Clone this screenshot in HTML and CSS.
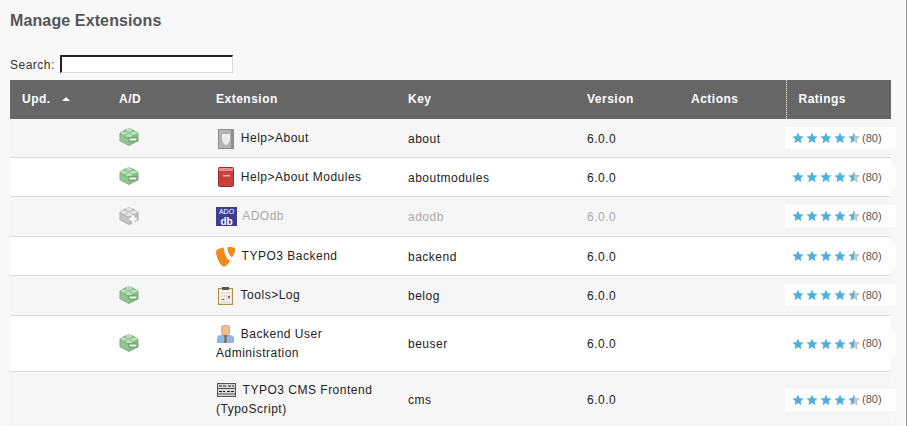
FILE: index.html
```html
<!DOCTYPE html>
<html lang="en">
<head>
  <meta charset="UTF-8" />
  <title>Manage Extensions</title>
  <link rel="stylesheet" href="styles.css">
</head>
<body>
  <svg class="defs" width="0" height="0">
    <defs>
      <symbol id="brick" viewBox="0 0 20 18">
        <path d="M.5 5.500Q.5 4.500 2 4L7 1Q10 0 13 1L18 4Q19.500 4.500 19.500 6V13L10 18 .5 13Z" fill="#7fb27f"/>
        <path d="M1.500 7L10 11.500V17L1.500 12.600Z" fill="#93c593"/>
        <path d="M18.500 7L10 11.500V17L18.500 12.600Z" fill="#86ba86"/>
        <path d="M1.500 6L10 1.500 18.500 6 10 10.500Z" fill="#a3cfa3"/>
        <ellipse cx="10" cy="2.800" rx="3.400" ry="2" fill="#8abe8a"/>
        <ellipse cx="10" cy="2.200" rx="3" ry="1.500" fill="#bcdfbc"/>
        <ellipse cx="5" cy="5.500" rx="3.400" ry="2" fill="#8abe8a"/>
        <ellipse cx="5" cy="4.900" rx="3" ry="1.500" fill="#bcdfbc"/>
        <ellipse cx="15" cy="5.500" rx="3.400" ry="2" fill="#8abe8a"/>
        <ellipse cx="15" cy="4.900" rx="3" ry="1.500" fill="#bcdfbc"/>
        <ellipse cx="10" cy="8" rx="3.400" ry="2" fill="#8abe8a"/>
        <ellipse cx="10" cy="7.400" rx="3" ry="1.500" fill="#bcdfbc"/>
      </symbol>
      <symbol id="star" viewBox="0 0 12 12">
        <path d="M6 .5 7.6 4.3 11.6 4.6 8.6 7.2 9.5 11.3 6 9.1 2.5 11.3 3.4 7.2 .4 4.6 4.4 4.3Z"/>
      </symbol>
    </defs>
  </svg>

  <h1 class="title">Manage Extensions</h1>
  <div class="search">
    <label for="q">Search:</label>
    <input id="q" type="text">
  </div>

  <table class="extensions">
    <colgroup>
      <col class="c-upd"><col class="c-ad"><col class="c-ext"><col class="c-key"><col class="c-ver"><col class="c-act"><col class="c-rate">
    </colgroup>
    <thead>
      <tr>
        <th>Upd. <span class="sort"></span></th>
        <th>A/D</th>
        <th>Extension</th>
        <th>Key</th>
        <th>Version</th>
        <th>Actions</th>
        <th class="ratings-head">Ratings</th>
      </tr>
    </thead>
    <tbody id="rows"></tbody>
  </table>

  <script>
    const icons = {
      about: '<svg class="icon i-about" width="16" height="20" viewBox="0 0 16 20"><rect x=".5" y=".5" width="15" height="19" fill="#b4b4b4" stroke="#8c8c8c"/><path d="M4 5 H12 V11 Q11 15 8 16 Q5 15 4 11Z" fill="#ececec"/><rect x="13" y="1" width="2" height="18" fill="#8f8f8f"/></svg>',
      modules: '<svg class="icon i-modules" width="16" height="20" viewBox="0 0 16 20"><rect x=".5" y=".5" width="15" height="19" rx="1" fill="#c9403f" stroke="#9a2a2a"/><rect x="1" y="1" width="14" height="3" fill="#e58b8a"/><rect x="5" y="8" width="7" height="1.500" fill="#f0b5b5"/></svg>',
      adodb: '<svg class="icon i-adodb" width="21" height="19" viewBox="0 0 21 19"><rect width="21" height="19" fill="#3a3f94"/><text x="10.500" y="6.500" text-anchor="middle" class="ado">ADO</text><text x="10.500" y="17.500" text-anchor="middle" class="db">db</text></svg>',
      typo3: '<svg class="icon i-typo3" width="20" height="21" viewBox="0 0 20 21"><path d="M14.500 14.400c-.3.1-.5.1-.8.1-2.400 0-5.900-8.400-5.900-11.200 0-1 .2-1.400.6-1.700C5.400 1.900 1.600 3 .4 4.500.1 4.900 0 5.500 0 6.300 0 10.700 4.600 20.600 7.900 20.600c1.500 0 4.100-2.500 6.600-6.200zM13 1c3.100 0 6.200.5 6.200 2.200 0 3.500-2.200 7.700-3.300 7.700-2 0-4.500-5.500-4.500-8.300C11.400 1.300 11.900 1 13 1z" fill="#f08a1e"/></svg>',
      log: '<svg class="icon i-log" width="15" height="18" viewBox="0 0 15 18"><rect x=".6" y="1.600" width="13.800" height="15.800" fill="#fdfcf5" stroke="#b08f3f" stroke-width="1.200"/><rect x="4" y="0" width="7" height="3" fill="#555"/><path d="M3 6H12M3 9H12M3 12H12M3 15H12" stroke="#aaa" stroke-dasharray="1.500 1"/><rect x="10" y="9" width="2" height="2" fill="#d44"/><rect x="4" y="12" width="2" height="1" fill="#d44"/></svg>',
      user: '<svg class="icon i-user" width="17" height="18" viewBox="0 0 17 18"><path d="M0 18 V13 Q0 10 5 10 H12 Q17 10 17 13 V18Z" fill="#8fb8e0"/><rect x="4.500" y="0.500" width="8" height="9.500" rx="2" fill="#f3bd8a" stroke="#b98a5c" stroke-width=".6"/><path d="M7.500 10 H9.500 V18 H7.500Z" fill="#8a5a25"/></svg>',
      ts: '<svg class="icon i-ts" width="19" height="14" viewBox="0 0 19 14"><rect width="19" height="14" fill="#555"/><rect x="1" y="1" width="17" height="12" fill="#d8d8d8"/><path d="M2 3H9M11 3H17M2 8.500H8M10 8.500H17" stroke="#222" stroke-dasharray="3 1"/><path d="M1 5.500H18M1 11H18" stroke="#555"/></svg>'
    };

    const data = [
      { state: "on", icon: "about", name: "Help&gt;About", key: "about" },
      { state: "on", icon: "modules", name: "Help&gt;About Modules", key: "aboutmodules" },
      { state: "off", icon: "adodb", name: "ADOdb", key: "adodb" },
      { state: "", icon: "typo3", name: "TYPO3 Backend", key: "backend" },
      { state: "on", icon: "log", name: "Tools&gt;Log", key: "belog" },
      { state: "on", icon: "user", name: "Backend User Administration", key: "beuser", tall: true },
      { state: "", icon: "ts", name: "TYPO3 CMS Frontend (TypoScript)", key: "cms", tall: true }
    ];

    function brick(state) {
      if (!state) return "";
      const mark = state === "on"
        ? '<rect x="9.500" y="9.500" width="9" height="4" fill="#5f995f"/><rect x="10.500" y="10.500" width="7" height="2" fill="#fff"/>'
        : '<path d="M10.500 12H17.500M14 8.500V15.500" stroke="#fff" stroke-width="2.500"/>';
      return `<svg class="brick ${state}" width="20" height="18" viewBox="0 0 20 18"><use href="#brick"/>${mark}</svg>`;
    }

    function stars() {
      let out = "";
      for (let i = 0; i < 4; i++) out += '<svg class="star" width="12" height="12"><use href="#star"/></svg>';
      out += '<svg class="star half" width="12" height="12" viewBox="0 0 12 12"><use href="#star" width="12" height="12"/><path d="M6 .5 7.6 4.3 11.6 4.6 8.6 7.2 9.5 11.3 6 9.1Z" fill="#c6c6c6"/></svg>';
      return out;
    }

    document.getElementById("rows").innerHTML = data.map(row => `
      <tr class="${row.state === "off" ? "disabled" : ""} ${row.tall ? "tall" : ""}">
        <td></td>
        <td>${brick(row.state)}</td>
        <td>${icons[row.icon]} ${row.name}</td>
        <td class="plain">${row.key}</td>
        <td class="plain">6.0.0</td>
        <td></td>
        <td class="rating"><div class="rating-box">${stars()}<span class="count">(80)</span></div></td>
      </tr>`).join("");
  </script>
</body>
</html>
```

FILE: styles.css
```css
html, body {
  margin: 0;
  height: 426px;
  overflow: hidden;
}

body {
  background: #f8f8f8;
  font-family: "Liberation Sans", Arial, sans-serif;
  font-size: 12px;
  letter-spacing: 0.5px;
  color: #222222;
  padding: 0 15px 0 10px;
  box-sizing: border-box;
  width: 907px;
  border-right: 1px solid #999999;
}

.defs {
  display: block;
  height: 0;
}

.title {
  margin: 0;
  padding-top: 12px;
  font-size: 16px;
  line-height: 18px;
  color: #555555;
  letter-spacing: 0.12px;
}

.search {
  display: flex;
  align-items: center;
  gap: 5px;
  margin-top: 25px;
  height: 18px;
  font-size: 12px;
  color: #333333;
}

.search label {
  padding-top: 2px;
}

.search input {
  width: 173px;
  height: 18px;
  box-sizing: border-box;
  margin: 0;
  padding: 0;
  background: #ffffff;
  border: 1px solid #dddddd;
  border-top: 2px solid #222222;
  border-left: 2px solid #222222;
}

.extensions {
  table-layout: fixed;
  border-collapse: collapse;
  width: 881px;
  margin-top: 7px;
}

.c-upd, .c-ad { width: 97px; }
.c-ext { width: 192px; }
.c-key { width: 179px; }
.c-ver { width: 104px; }
.c-act { width: 107px; }
.c-rate { width: 105px; }

th {
  box-sizing: border-box;
  height: 39px;
  padding: 0 12px 2px;
  background: #666666;
  color: #ffffff;
  text-align: left;
  font-size: 12px;
  white-space: nowrap;
}

.ratings-head {
  border-left: 1px dotted #ffffff;
}

.sort {
  display: inline-block;
  width: 0;
  height: 0;
  margin-left: 7px;
  vertical-align: 2px;
  border: 4.5px solid transparent;
  border-top: 0;
  border-bottom: 4px solid #ffffff;
}

td {
  box-sizing: border-box;
  height: 39px;
  padding: 0 12px;
  border-bottom: 1px solid #dddddd;
  line-height: 20px;
  color: #222222;
}

td.plain {
  padding-top: 2px;
}

tbody tr:nth-child(odd) {
  background: #f6f6f6;
}

tbody tr:nth-child(even) {
  background: #ffffff;
}

tbody tr:nth-child(1) td {
  height: 38px;
}

tbody tr:nth-child(3) td,
tbody tr:nth-child(5) td {
  height: 40px;
}

tbody tr.tall td {
  height: 56px;
  line-height: 19px;
  padding-top: 1px;
}

tbody tr.tall td.plain {
  padding-top: 2px;
}

.disabled td {
  color: #aaaaaa;
}

.brick {
  display: block;
  margin-top: -1px;
}

.brick.off {
  filter: grayscale(1) brightness(1.08);
}

.icon {
  vertical-align: middle;
  margin-top: -4px;
  margin-bottom: -4px;
}

.i-about, .i-modules { margin-left: 2px; margin-right: 3px; }
.i-adodb, .i-typo3 { margin-right: 2px; }
.i-log { margin-left: 2px; margin-right: 4px; }
.i-user { margin-left: 1px; margin-right: 3px; }
.i-ts { margin-left: 1px; margin-right: 3px; }

.ado, .db {
  fill: #ffffff;
  font-family: "Liberation Sans", Arial, sans-serif;
  letter-spacing: 0;
}

.ado { font-size: 7px; }
.db { font-size: 10px; font-weight: bold; }

.rating {
  white-space: nowrap;
}

.rating-box {
  display: flex;
  align-items: center;
  gap: 2px;
  width: 111px;
  height: 22px;
  box-sizing: border-box;
  margin-left: -13px;
  padding-left: 7px;
  background: #ffffff;
}

.star {
  fill: #4cb1dc;
  flex: none;
}

.count {
  font-size: 11px;
  letter-spacing: 0;
  color: #555555;
}
```
